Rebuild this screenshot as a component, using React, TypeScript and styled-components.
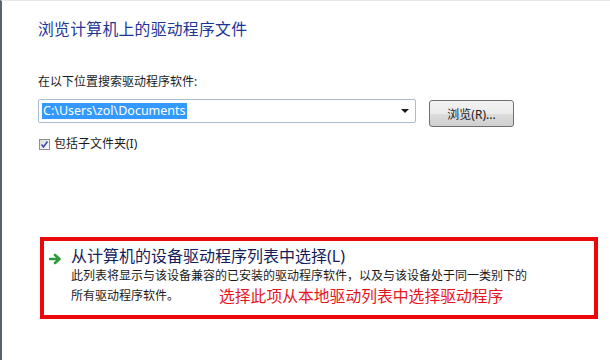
import React from 'react'
import styled, { createGlobalStyle } from 'styled-components'

const FONT = `"Noto Sans", "Noto Sans CJK SC", sans-serif`

const GlobalStyle = createGlobalStyle`
  html, body {
    margin: 0;
    padding: 0;
    background: #ffffff;
  }
  body {
    font-family: ${FONT};
  }
`

const Window = styled.div`
  width: 610px;
  height: 360px;
  box-sizing: border-box;
  border-left: 2px solid #56666e;
  border-top: 1px solid #e6e8ea;
  background: #ffffff;
  padding: 16px 0 0 36px;
  display: flex;
  flex-direction: column;
  overflow: hidden;
`

const Title = styled.h1`
  margin: 0;
  font-family: ${FONT};
  font-weight: normal;
  font-size: 15.8px;
  line-height: 24px;
  color: #1d3596;
  letter-spacing: 0.3px;
`

const Label = styled.div`
  margin-top: 33px;
  font-size: 12px;
  line-height: 16px;
  color: #1a1a1a;
`

const PathRow = styled.div`
  margin-top: 9px;
  display: flex;
  align-items: flex-start;
`

const Combo = styled.div`
  width: 378px;
  height: 24px;
  box-sizing: border-box;
  border: 1px solid #abbdce;
  border-radius: 2px;
  display: flex;
  align-items: center;
  padding: 0 6px 0 3px;
`

const Selected = styled.span`
  background: #3399ff;
  color: #ffffff;
  font-family: "Noto Sans", sans-serif;
  font-size: 12.5px;
  line-height: 16px;
  padding: 0 1px;
`

const Caret = styled.span`
  margin-left: auto;
  width: 0;
  height: 0;
  border-left: 4px solid transparent;
  border-right: 4px solid transparent;
  border-top: 4px solid #1a1a1a;
`

const Button = styled.button`
  margin-left: 13px;
  margin-top: 1px;
  width: 85px;
  height: 27px;
  border: 1px solid #707070;
  border-radius: 3px;
  background: linear-gradient(#f2f2f2 0%, #ebebeb 50%, #dddddd 51%, #cfcfcf 100%);
  font-family: ${FONT};
  font-size: 12px;
  color: #1a1a1a;
  padding: 0;
`

const CheckRow = styled.label`
  margin-top: 9px;
  margin-left: 1px;
  display: flex;
  align-items: center;
  gap: 4px;
  font-size: 12px;
  line-height: 16px;
  color: #1a1a1a;
`

const Box = styled.span`
  width: 11px;
  height: 11px;
  box-sizing: border-box;
  border: 1px solid #8e8f8f;
  background: linear-gradient(135deg, #dcdcdc, #fdfdfd);
  display: flex;
  align-items: center;
  justify-content: center;
`

const Highlight = styled.div`
  margin-top: 85px;
  margin-left: 2px;
  width: 558px;
  height: 82px;
  box-sizing: border-box;
  border: 4px solid #ec0808;
  padding: 4px 0 0 5px;
  display: flex;
  align-items: flex-start;
  gap: 9px;
`

const Arrow = styled.svg`
  margin-top: 8px;
  flex: none;
`

const OptionText = styled.div`
  display: flex;
  flex-direction: column;
`

const OptionTitle = styled.div`
  font-size: 16px;
  line-height: 23px;
  color: #151d5a;
`

const Desc = styled.div<{ $offset?: number }>`
  margin-top: ${p => p.$offset ?? 0}px;
  font-size: 12px;
  line-height: 16px;
  color: #1a1a1a;
  display: flex;
  align-items: center;
`

const Note = styled.span`
  margin-left: 40px;
  font-size: 15.8px;
  line-height: 16px;
  color: #e8141e;
`

export default function App() {
  return (
    <>
      <GlobalStyle />
      <Window>
        <Title>浏览计算机上的驱动程序文件</Title>
        <Label>在以下位置搜索驱动程序软件:</Label>
        <PathRow>
          <Combo>
            <Selected>C:\Users\zol\Documents</Selected>
            <Caret />
          </Combo>
          <Button type="button">浏览(R)...</Button>
        </PathRow>
        <CheckRow>
          <Box>
            <svg width="9" height="9" viewBox="0 0 9 9">
              <path d="M1.5 4.5 L3.5 7 L7.5 1.5" fill="none" stroke="#3c4f9a" strokeWidth="1.6" />
            </svg>
          </Box>
          包括子文件夹(I)
        </CheckRow>
        <Highlight>
          <Arrow width="13" height="12" viewBox="0 0 13 12">
            <path d="M1 6 H10 M6 2 L10.5 6 L6 10" fill="none" stroke="#2f9a3a" strokeWidth="2.6" strokeLinecap="round" strokeLinejoin="round" />
          </Arrow>
          <OptionText>
            <OptionTitle>从计算机的设备驱动程序列表中选择(L)</OptionTitle>
            <Desc>此列表将显示与该设备兼容的已安装的驱动程序软件，以及与该设备处于同一类别下的</Desc>
            <Desc $offset={4}>
              所有驱动程序软件。
              <Note>选择此项从本地驱动列表中选择驱动程序</Note>
            </Desc>
          </OptionText>
        </Highlight>
      </Window>
    </>
  )
}
